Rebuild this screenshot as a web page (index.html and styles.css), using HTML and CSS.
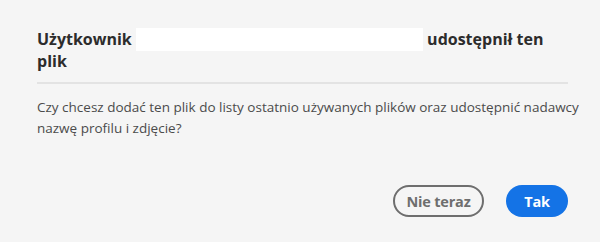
FILE: index.html
```html
<!DOCTYPE html>
<html lang="pl">
<head>
<meta charset="utf-8">
<link rel="stylesheet" href="styles.css">
</head>
<body>
<div class="dialog">
  <h2 class="title">Użytkownik <span class="redact"></span> udostępnił ten plik</h2>
  <div class="divider"></div>
  <p class="body">Czy chcesz dodać ten plik do listy ostatnio używanych plików oraz udostępnić nadawcy nazwę profilu i zdjęcie?</p>
  <div class="actions">
    <button class="btn btn-secondary">Nie teraz</button>
    <button class="btn btn-primary">Tak</button>
  </div>
</div>
</body>
</html>
```
FILE: styles.css
```css
html, body {
  margin: 0;
  padding: 0;
  background: #f5f5f5;
}
.dialog {
  width: 600px;
  height: 242px;
  box-sizing: border-box;
  padding: 28px 32px 0 37px;
  font-family: "Open Sans", "Noto Sans", sans-serif;
  display: flex;
  flex-direction: column;
}
.title {
  margin: 0;
  font-size: 16px;
  font-weight: 700;
  line-height: 21px;
  color: #2c2c2c;
}
.redact {
  display: inline-block;
  width: 287px;
  height: 23px;
  background: #ffffff;
  vertical-align: -6px;
}
.divider {
  margin-top: 10px;
  height: 2px;
  background: #e3e3e3;
}
.body {
  margin: 13px -26px 0 0;
  font-size: 13.5px;
  line-height: 21px;
  color: #4b4b4b;
}
.actions {
  display: flex;
  justify-content: flex-end;
  gap: 22px;
  margin-top: auto;
  margin-bottom: 25px;
}
.btn {
  height: 32px;
  border-radius: 16px;
  font-family: inherit;
  font-size: 14.5px;
  font-weight: 700;
  letter-spacing: -0.2px;
  padding: 0;
  box-sizing: border-box;
}
.btn-secondary {
  width: 91px;
  background: transparent;
  border: 2px solid #6e6e6e;
  color: #6e6e6e;
}
.btn-primary {
  width: 62px;
  background: #1473e6;
  border: none;
  color: #ffffff;
}
```
